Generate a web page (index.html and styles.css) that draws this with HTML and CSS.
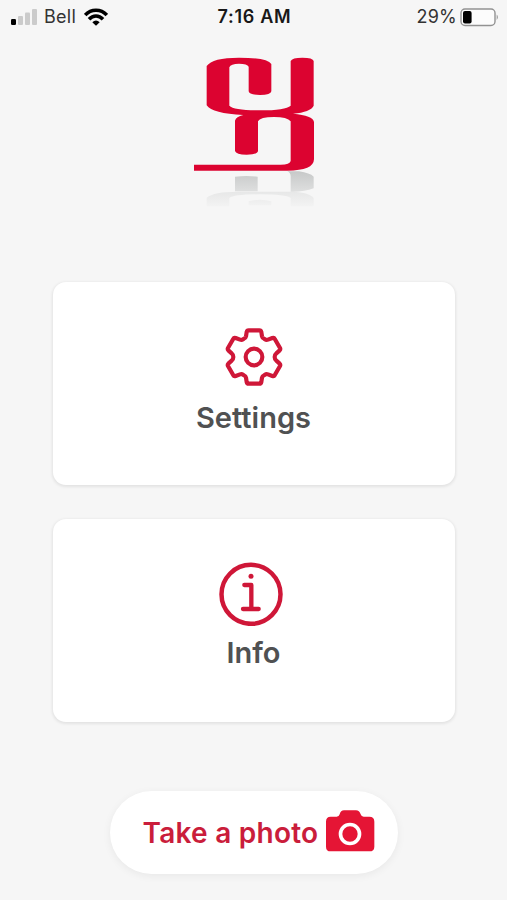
FILE: index.html
```html
<!DOCTYPE html>
<html lang="en">
<head>
<meta charset="utf-8">
<title>Home</title>
<link rel="stylesheet" href="styles.css">
</head>
<body>
<main class="screen">
  <header class="status">
    <div class="carrier">
      <svg class="signal" width="28" height="18" viewBox="0 0 28 18"><rect x="1" y="11" width="5" height="6" rx="1.2" fill="#000"/><g fill="#cbcbcb"><rect x="8" y="8" width="5" height="9" rx="1"/><rect x="15" y="4.500" width="5" height="12.500" rx="1"/><rect x="22" y="1" width="5" height="16" rx="1"/></g></svg>
      <span class="carrier-name">Bell</span>
      <svg class="wifi" width="24" height="18" viewBox="0 0 24 18" fill="none" stroke="#000" stroke-width="3.500"><path d="M1.200 7C7 .6 17 .6 22.800 7"/><path d="M5 11.300C9 7 15 7 19 11.300"/><path d="M8.300 14.200Q12 10.800 15.700 14.200L12 17.800Z" fill="#000" stroke="none"/></svg>
    </div>
    <div class="time">7:16 AM</div>
    <div class="power">
      <span class="percent">29%</span>
      <svg class="battery" width="39" height="19" viewBox="0 0 39 19"><rect x="1" y="1" width="34" height="16.500" rx="4" fill="#fcfcfc" stroke="#929292" stroke-width="1.400"/><rect x="3" y="3" width="8.600" height="12.500" rx="2" fill="#000"/><path d="M36.700 6.500Q39 9.200 36.700 12Z" fill="#929292"/></svg>
    </div>
  </header>

  <svg class="logo" width="140" height="170" viewBox="0 0 420 510">
    <defs>
      <linearGradient id="fade" x1="0" y1="374" x2="0" y2="490" gradientUnits="userSpaceOnUse"><stop offset="0" stop-color="#c6c8c8"/><stop offset=".45" stop-color="#dadbdb"/><stop offset="1" stop-color="#f5f5f5"/></linearGradient>
    </defs>
    <path fill="#dc0330" d="M68 60Q85 35 165 35Q250 35 262 54V136Q261 147 228 147Q195 147 194 136V62Q190 53 165 53Q140 53 136 64V179Q150 193 228 193Q305 193 320 179V45Q324 35 355 35Q387 35 389 45V179Q380 198 327 203Q387 208 390 228V340Q389 374 310 374H30V356H290Q318 356 320 345V226Q310 213 270 213Q228 213 222 226V315Q220 326 188 326Q156 326 153 315V224Q156 212 178 207Q85 203 68 178Z"/>
    <g fill="url(#fade)">
      <path d="M310 376H345Q378 381 389 392V427Q360 438 320 437V390Q319 379 310 376ZM153 392Q188 388 221 392V436H153Z"/>
      <path d="M68 455Q90 437 160 437H325Q378 440 389 456V481H320V456Q305 445 228 445Q150 445 136 456V481H68ZM194 466Q228 457 262 466V478H194Z" opacity=".65"/>
    </g>
  </svg>

  <nav class="cards">
    <a class="card">
      <svg class="gear" width="60" height="60" viewBox="-90 -90 180 180" fill="none" stroke="#cf1738" stroke-width="12.500" stroke-linejoin="round"><path d="M-16 -80H16Q21 -80 22 -75L24 -62Q25 -57 30 -55L33 -53Q37 -50 42 -52L55 -57Q60 -59 62 -55L78 -27Q80 -23 77 -20L67 -11Q62 -7 62 0Q62 7 67 11L77 20Q80 23 78 27L62 55Q60 59 55 57L42 52Q37 50 33 53L30 55Q25 57 24 62L22 75Q21 80 16 80H-16Q-21 80 -22 75L-24 62Q-25 57 -30 55L-33 53Q-37 50 -42 52L-55 57Q-60 59 -62 55L-78 27Q-80 23 -77 20L-67 11Q-62 7 -62 0Q-62 -7 -67 -11L-77 -20Q-80 -23 -78 -27L-62 -55Q-60 -59 -55 -57L-42 -52Q-37 -50 -33 -53L-30 -55Q-25 -57 -24 -62L-22 -75Q-21 -80 -16 -80Z"/><circle r="25"/></svg>
      <span class="label settings-label">Settings</span>
    </a>
    <a class="card">
      <svg class="info" width="64" height="64" viewBox="0 0 192 192" fill="none" stroke="#cf1738" stroke-linecap="round" stroke-linejoin="round"><circle cx="96" cy="97" r="88.500" stroke-width="13.500"/><circle cx="96" cy="43" r="7.500" fill="#cf1738" stroke="none"/><path d="M76 69H97V140M72 141H119" stroke-width="13"/></svg>
      <span class="label info-label">Info</span>
    </a>
  </nav>

  <button class="photo">
    <span class="photo-label">Take a photo</span>
    <svg class="camera" width="50" height="43" viewBox="0 0 150 129"><path fill="#e51535" d="M17 23H35Q42 23 44 16Q47 4 57 4H93Q103 4 107 16Q109 23 116 23H133Q148 23 148 38V113Q148 127 133 127H17Q3 127 3 113V38Q3 23 17 23Z"/><circle cx="75" cy="75" r="28.500" fill="none" stroke="#fff" stroke-width="11"/></svg>
  </button>
</main>
</body>
</html>
```
FILE: styles.css
```css
* { box-sizing: border-box; }
body {
  margin: 0;
  background: #f6f6f6;
  font-family: Inter, "Liberation Sans", sans-serif;
}
.screen {
  height: 900px;
  display: flex;
  flex-direction: column;
  align-items: center;
  overflow: hidden;
}
svg { display: block; flex: none; }
.status {
  width: 100%;
  height: 34px;
  padding: 0 8px 0 10px;
  display: grid;
  grid-template-columns: 1fr auto 1fr;
  align-items: center;
  color: #181818;
  font-size: 18px;
  line-height: 34px;
}
.carrier, .power { display: flex; align-items: center; }
.carrier-name { margin-left: 6px; width: 33px; color: #333; letter-spacing: .3px; }
.wifi { margin-left: 7px; }
.time { font-weight: 600; white-space: nowrap; letter-spacing: .7px; }
.power { justify-content: flex-end; color: #333; }
.percent { letter-spacing: .2px; }
.battery { margin-left: 3px; }
.logo { margin-top: 12px; }
.cards {
  width: 402px;
  margin-top: 66px;
  display: grid;
  gap: 34px;
}
.card {
  height: 203px;
  padding-top: 45px;
  display: flex;
  flex-direction: column;
  align-items: center;
  background: #fff;
  border-radius: 13px;
  box-shadow: 0 1px 3px 1px rgba(0, 0, 0, .08);
}
.label {
  font-size: 29px;
  line-height: 36px;
  font-weight: 600;
  color: #505152;
}
.settings-label { margin-top: 13px; }
.info { margin: -2px 6px 0 0; }
.info-label { margin-top: 9px; }
.photo {
  width: 288px;
  height: 83px;
  margin-top: 69px;
  padding: 0 23px 0 33px;
  display: flex;
  align-items: center;
  justify-content: space-between;
  border: 0;
  border-radius: 42px;
  background: #fff;
  box-shadow: 0 2px 8px rgba(0, 0, 0, .06);
  font: 600 28px/36px Inter, "Liberation Sans", sans-serif;
  letter-spacing: .25px;
  color: #ca1d3b;
  white-space: nowrap;
}
.camera { margin-top: -4px; }
```
